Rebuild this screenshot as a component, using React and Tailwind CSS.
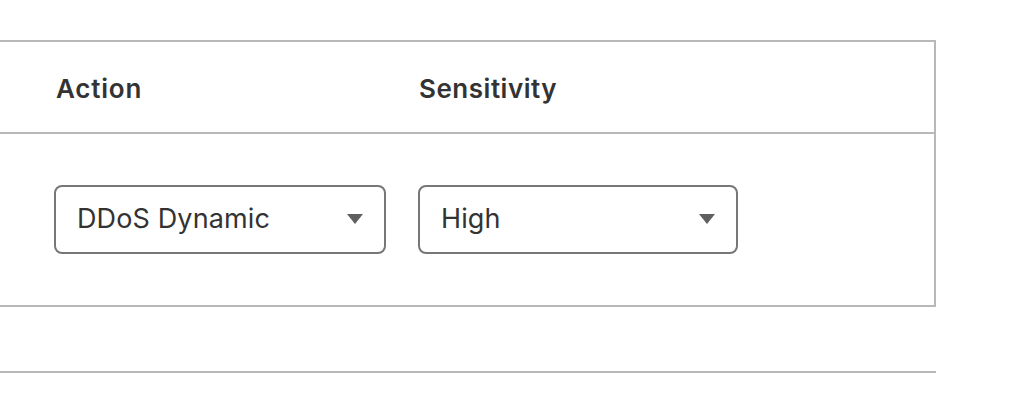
import React from "react";

function Caret() {
  return (
    <svg width="16" height="10" viewBox="0 0 16 10" className="shrink-0">
      <path d="M0 0 L16 0 L8 10 Z" fill="#5f5f5f" />
    </svg>
  );
}

function Select({ value, width }) {
  return (
    <div
      className={`flex h-[69px] items-center justify-between rounded-[8px] border-2 border-[#777777] bg-white pl-[21px] pr-[21px] ${width}`}
    >
      <span className="text-[27px] tracking-[0.005em] text-[#333333]">{value}</span>
      <Caret />
    </div>
  );
}

export default function App() {
  return (
    <div
      className="h-[412px] w-[1012px] bg-white pt-[40px]"
      style={{ fontFamily: "Inter, 'Noto Sans', sans-serif" }}
    >
      <div className="w-[936px] border-t-2 border-r-2 border-b-2 border-[#b8b8b8]">
        <div className="flex h-[92px] items-center border-b-2 border-[#b8b8b8] pl-[56px] pt-[2px]">
          <div className="w-[363px] text-[26px] font-semibold tracking-[0.03em] text-[#333333]">Action</div>
          <div className="text-[26px] font-semibold tracking-[0.02em] text-[#333333]">Sensitivity</div>
        </div>
        <div className="flex h-[171px] items-center gap-[32px] pl-[54px] pb-[1px]">
          <Select value="DDoS Dynamic" width="w-[332px]" />
          <Select value="High" width="w-[320px]" />
        </div>
      </div>
      <div className="h-[66px] w-[936px] border-b-2 border-[#b8b8b8]" />
    </div>
  );
}
